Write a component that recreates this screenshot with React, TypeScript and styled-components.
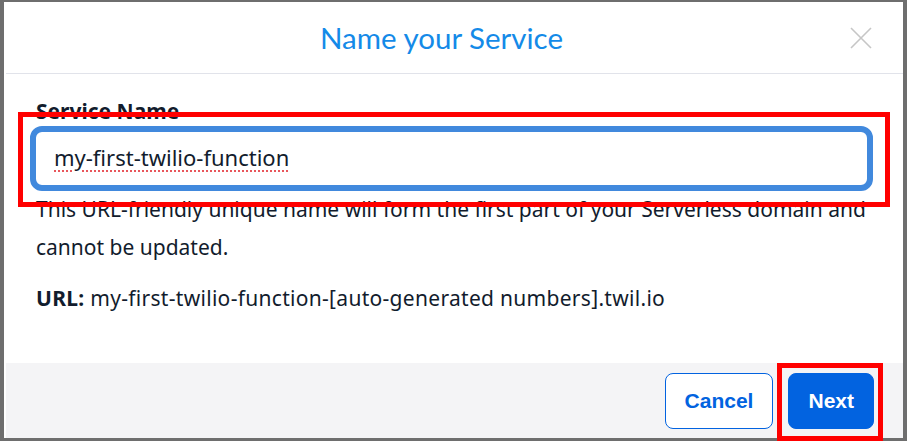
import styled, {createGlobalStyle} from 'styled-components';

const GlobalStyle = createGlobalStyle`
  html, body {
    margin: 0;
    padding: 0;
    background: #6e6e6e;
  }
  body {
    font-family: "Noto Sans", "DejaVu Sans", sans-serif;
    color: #121c2d;
  }
`;

const Overlay = styled.div`
  width: 907px;
  height: 441px;
  padding: 2px 4px 3px 4px;
  box-sizing: border-box;
  position: relative;
  overflow: hidden;
`;

const Modal = styled.div`
  width: 899px;
  height: 436px;
  background: #fff;
  display: flex;
  flex-direction: column;
`;

const Header = styled.div`
  height: 71px;
  display: flex;
  align-items: center;
  border-bottom: 1px solid #e1e3ea;
  margin-left: 2px;
  padding: 0 29px 0 0;
`;

const Title = styled.h2`
  flex: 1;
  margin: 0;
  padding-left: 29px;
  text-align: center;
  font-family: Lato, "Noto Sans", sans-serif;
  font-weight: 400;
  font-size: 29.5px;
  color: #148ae8;
`;

const CloseButton = styled.button`
  width: 26px;
  height: 26px;
  padding: 0;
  border: none;
  background: none;
  display: flex;
  align-items: center;
  justify-content: center;
`;

const Body = styled.div`
  flex: 1;
  padding: 24px 30px 0 32px;
`;

const Label = styled.div`
  font-weight: 700;
  font-size: 21px;
  line-height: 26px;
  margin-bottom: 2px;
`;

const Field = styled.div`
  margin-left: -6px;
  height: 65px;
  border: 6px solid #4189dd;
  border-radius: 12px;
  box-sizing: border-box;
  display: flex;
  align-items: center;
  padding: 0 0 3px 18px;
  font-size: 22px;
`;

const Misspelled = styled.span`
  text-decoration: underline dotted #e8565b;
  text-decoration-thickness: 2px;
  text-underline-offset: 4px;
`;

const Help = styled.p`
  margin: -1px 0 0 0;
  font-size: 21px;
  line-height: 38px;
`;

const UrlLine = styled.p`
  margin: 13px 0 0 0;
  font-size: 21px;
  line-height: 38px;
  letter-spacing: 0.3px;

  strong {
    font-weight: 700;
  }
`;

const Footer = styled.div`
  height: 75px;
  margin-left: 2px;
  background: #f4f4f6;
  display: flex;
  align-items: flex-start;
  justify-content: flex-end;
  gap: 15px;
  padding: 10px 29px 0 0;
  box-sizing: border-box;
`;

const Button = styled.button<{ $primary?: boolean }>`
  height: 56px;
  padding: 0 19px;
  border-radius: 8px;
  border: 1px solid #0263e0;
  background: ${p => p.$primary ? '#0263e0' : '#fff'};
  color: ${p => p.$primary ? '#fff' : '#0263e0'};
  font-family: "Liberation Sans", Arial, sans-serif;
  font-weight: 700;
  font-size: 21px;
`;

const Highlight = styled.div<{ $left: number; $top: number; $width: number; $height: number }>`
  position: absolute;
  left: ${p => p.$left}px;
  top: ${p => p.$top}px;
  width: ${p => p.$width}px;
  height: ${p => p.$height}px;
  border: 5px solid #ff0000;
  box-sizing: border-box;
  pointer-events: none;
`;

export default function App() {
  return (<>
      <GlobalStyle/>
      <Overlay>
        <Modal>
          <Header>
            <Title>Name your Service</Title>
            <CloseButton aria-label='Close'>
              <svg width='22' height='22' viewBox='0 0 22 22'>
                <path d='M1 1 L21 21 M21 1 L1 21' stroke='#c6c6c6' strokeWidth='1.6' fill='none'/>
              </svg>
            </CloseButton>
          </Header>
          <Body>
            <Label>Service Name</Label>
            <Field><Misspelled>my-first-twilio-function</Misspelled></Field>
            <Help>This URL-friendly unique name will form the first part of your Serverless domain and cannot be updated.</Help>
            <UrlLine><strong>URL:</strong> my-first-twilio-function-[auto-generated numbers].twil.io</UrlLine>
          </Body>
          <Footer>
            <Button>Cancel</Button>
            <Button $primary>Next</Button>
          </Footer>
        </Modal>
        <Highlight $left={18} $top={112} $width={872} $height={95}/>
        <Highlight $left={777} $top={363} $width={106} $height={78}/>
      </Overlay>
    </>
  );
}
